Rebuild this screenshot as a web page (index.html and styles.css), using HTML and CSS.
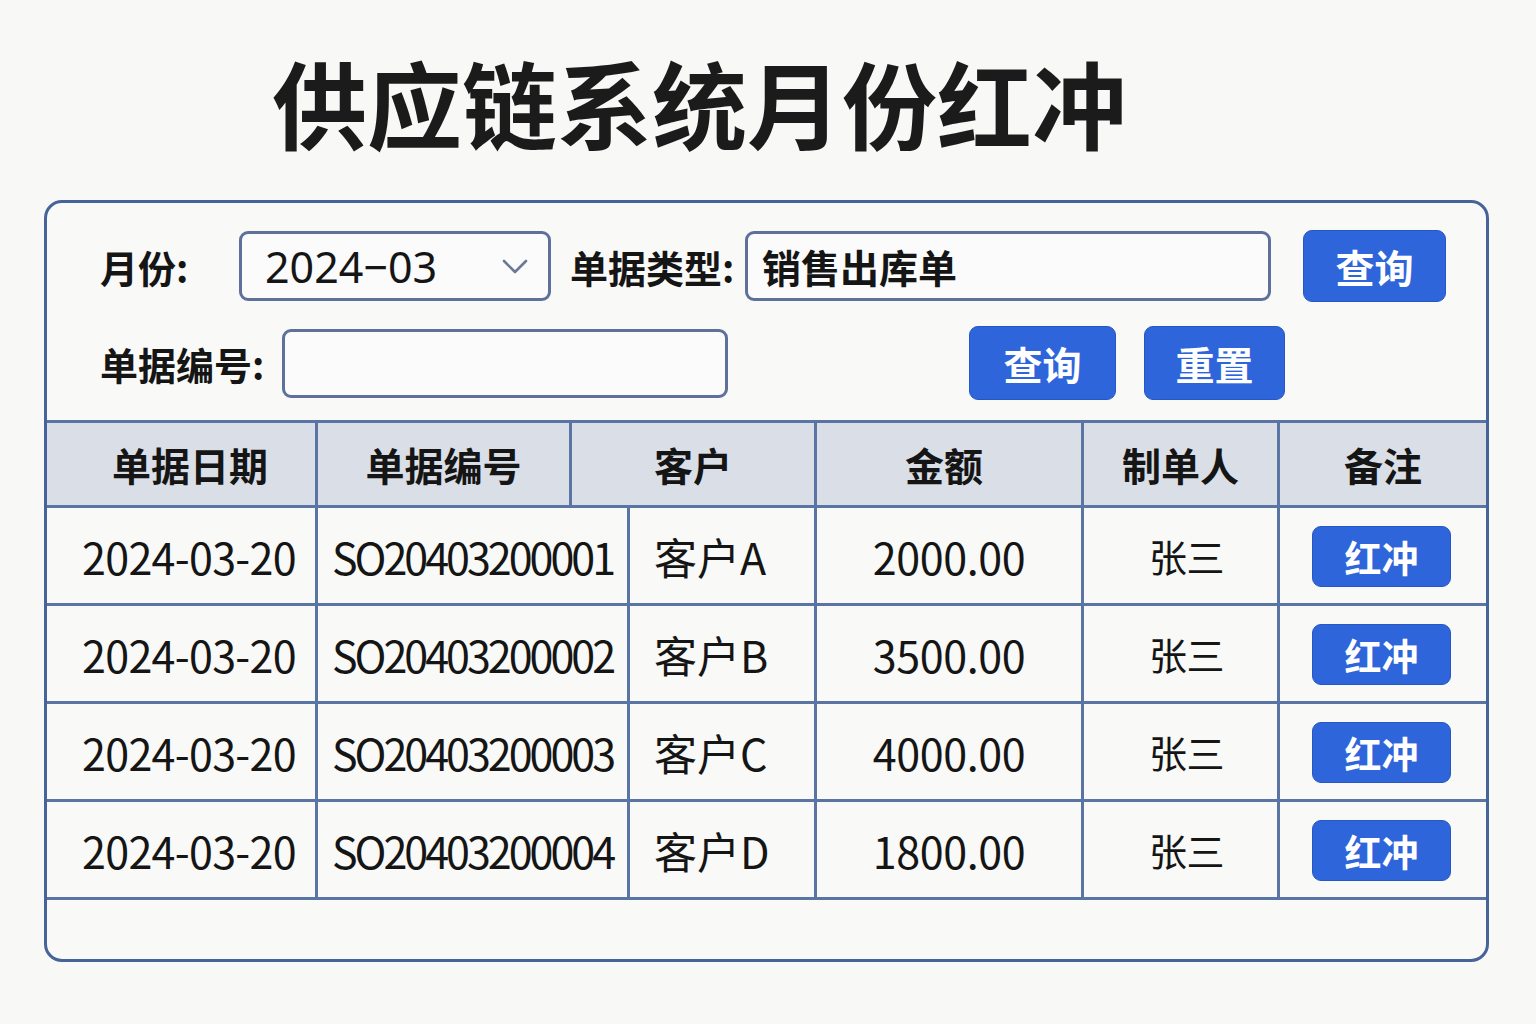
FILE: index.html
```html
<!DOCTYPE html>
<html lang="zh-CN">
<head>
<meta charset="utf-8">
<title>供应链系统月份红冲</title>
<link rel="stylesheet" href="styles.css">
</head>
<body>
<h1 class="title">供应链系统月份红冲</h1>
<div class="card">
  <div class="filters">
    <div class="frow frow1">
      <span class="label label-month">月份:</span>
      <div class="select">
        <span class="select-value">2024−03</span>
        <svg class="chevron" width="26" height="16" viewBox="0 0 26 16"><path d="M2 2 L13 13 L24 2" fill="none" stroke="#6b7897" stroke-width="2.6" stroke-linecap="round" stroke-linejoin="round"/></svg>
      </div>
      <span class="label label-type">单据类型:</span>
      <div class="input input-type"><span class="input-value">销售出库单</span></div>
      <button class="btn btn-q1">查询</button>
    </div>
    <div class="frow frow2">
      <span class="label label-no">单据编号:</span>
      <div class="input input-no"></div>
      <button class="btn btn-q2">查询</button>
      <button class="btn btn-reset">重置</button>
    </div>
  </div>
  <div class="table">
    <div class="thead">
      <div class="th th-first">单据日期</div>
      <div class="th">单据编号</div>
      <div class="th">客户</div>
      <div class="th th-amt">金额</div>
      <div class="th">制单人</div>
      <div class="th">备注</div>
    </div>
    <div class="tr">
      <div class="td td-date">2024-03-20</div>
      <div class="td td-id">SO20403200001</div>
      <div class="td td-left">客户A</div>
      <div class="td">2000.00</div>
      <div class="td td-name">张三</div>
      <div class="td"><button class="btn-red">红冲</button></div>
    </div>
    <div class="tr">
      <div class="td td-date">2024-03-20</div>
      <div class="td td-id">SO20403200002</div>
      <div class="td td-left">客户B</div>
      <div class="td">3500.00</div>
      <div class="td td-name">张三</div>
      <div class="td"><button class="btn-red">红冲</button></div>
    </div>
    <div class="tr">
      <div class="td td-date">2024-03-20</div>
      <div class="td td-id">SO20403200003</div>
      <div class="td td-left">客户C</div>
      <div class="td">4000.00</div>
      <div class="td td-name">张三</div>
      <div class="td"><button class="btn-red">红冲</button></div>
    </div>
    <div class="tr">
      <div class="td td-date">2024-03-20</div>
      <div class="td td-id">SO20403200004</div>
      <div class="td td-left">客户D</div>
      <div class="td">1800.00</div>
      <div class="td td-name">张三</div>
      <div class="td"><button class="btn-red">红冲</button></div>
    </div>
  </div>
</div>
</body>
</html>
```
FILE: styles.css
```css
* { box-sizing: border-box; }
html, body { margin: 0; padding: 0; }
body {
  background: #f8f8f7;
  font-family: "Noto Sans CJK SC", "Noto Sans", sans-serif;
  color: #161616;
  width: 1536px;
  height: 1024px;
  overflow: hidden;
}
.title {
  margin: 0;
  padding: 50px 0 0 272px;
  height: 200px;
  font-size: 95px;
  line-height: 104px;
  font-weight: 700;
  color: #1b1b1b;
  letter-spacing: 0;
}
.card {
  margin-left: 44px;
  width: 1445px;
  height: 762px;
  border: 3px solid #46639a;
  border-radius: 18px;
  overflow: hidden;
  background: #f9f9f8;
}
.filters {
  height: 217px;
  padding-top: 27px;
}
.frow {
  display: flex;
  align-items: center;
  padding-left: 53px;
}
.frow1 { height: 72px; }
.frow2 { height: 74px; margin-top: 24px; }
.label {
  font-size: 38px;
  font-weight: 700;
  color: #151515;
  white-space: nowrap;
}
.label-month { width: 139px; }
.label-type { width: 175px; margin-left: 19px; }
.label-no { width: 182px; }
.select, .input {
  height: 70px;
  border: 3px solid #5d719a;
  border-radius: 9px;
  background: #fbfbfb;
  display: flex;
  align-items: center;
}
.select {
  width: 312px;
  padding: 0 20px 0 23px;
  justify-content: space-between;
}
.select-value {
  font-family: "Noto Sans", sans-serif;
  font-size: 43px;
  color: #151515;
}
.chevron { margin-top: 2px; }
.input-type { width: 526px; padding-left: 14px; }
.input-value {
  font-size: 39px;
  font-weight: 700;
  color: #151515;
}
.input-no { width: 446px; height: 69px; }
.btn {
  border: 1px solid #2657c4;
  background: #2f65da;
  color: #ffffff;
  font-family: "Noto Sans CJK SC", sans-serif;
  font-size: 39px;
  font-weight: 700;
  border-radius: 9px;
  padding: 0;
  display: flex;
  align-items: center;
  justify-content: center;
}
.btn-q1 { width: 143px; height: 72px; margin-left: 32px; }
.btn-q2 { width: 147px; height: 74px; margin-left: 241px; }
.btn-reset { width: 141px; height: 74px; margin-left: 28px; }

.table { border-top: 3px solid #5a75a3; }
.thead, .tr {
  display: grid;
  border-bottom: 3px solid #5a75a3;
}
.thead {
  grid-template-columns: 271px 254px 245px 267px 196px 1fr;
  height: 85px;
  background: #d9dee7;
}
.tr {
  grid-template-columns: 271px 312px 187px 267px 196px 1fr;
  height: 98px;
}
.th, .td {
  border-right: 3px solid #5a75a3;
  display: flex;
  align-items: center;
  justify-content: center;
}
.th:last-child, .td:last-child { border-right: none; }
.th {
  font-size: 39px;
  font-weight: 700;
  color: #151515;
}
.th-first { padding-left: 18px; }
.th-amt { padding-right: 10px; }
.td {
  font-size: 43px;
  color: #151515;
  letter-spacing: -0.4px;
}
.td-date { padding-left: 16px; letter-spacing: -0.7px; }
.td-id { letter-spacing: -3px; }
.td-left { justify-content: flex-start; padding-left: 24px; letter-spacing: 0; }
.td-name { font-size: 38px; padding-left: 12px; }
.btn-red {
  width: 139px;
  height: 61px;
  border: 1px solid #2657c4;
  background: #2f65da;
  color: #fff;
  font-family: "Noto Sans CJK SC", sans-serif;
  font-size: 37px;
  font-weight: 700;
  border-radius: 9px;
  padding: 0;
  margin-left: -3px;
  margin-top: 2px;
}
```
